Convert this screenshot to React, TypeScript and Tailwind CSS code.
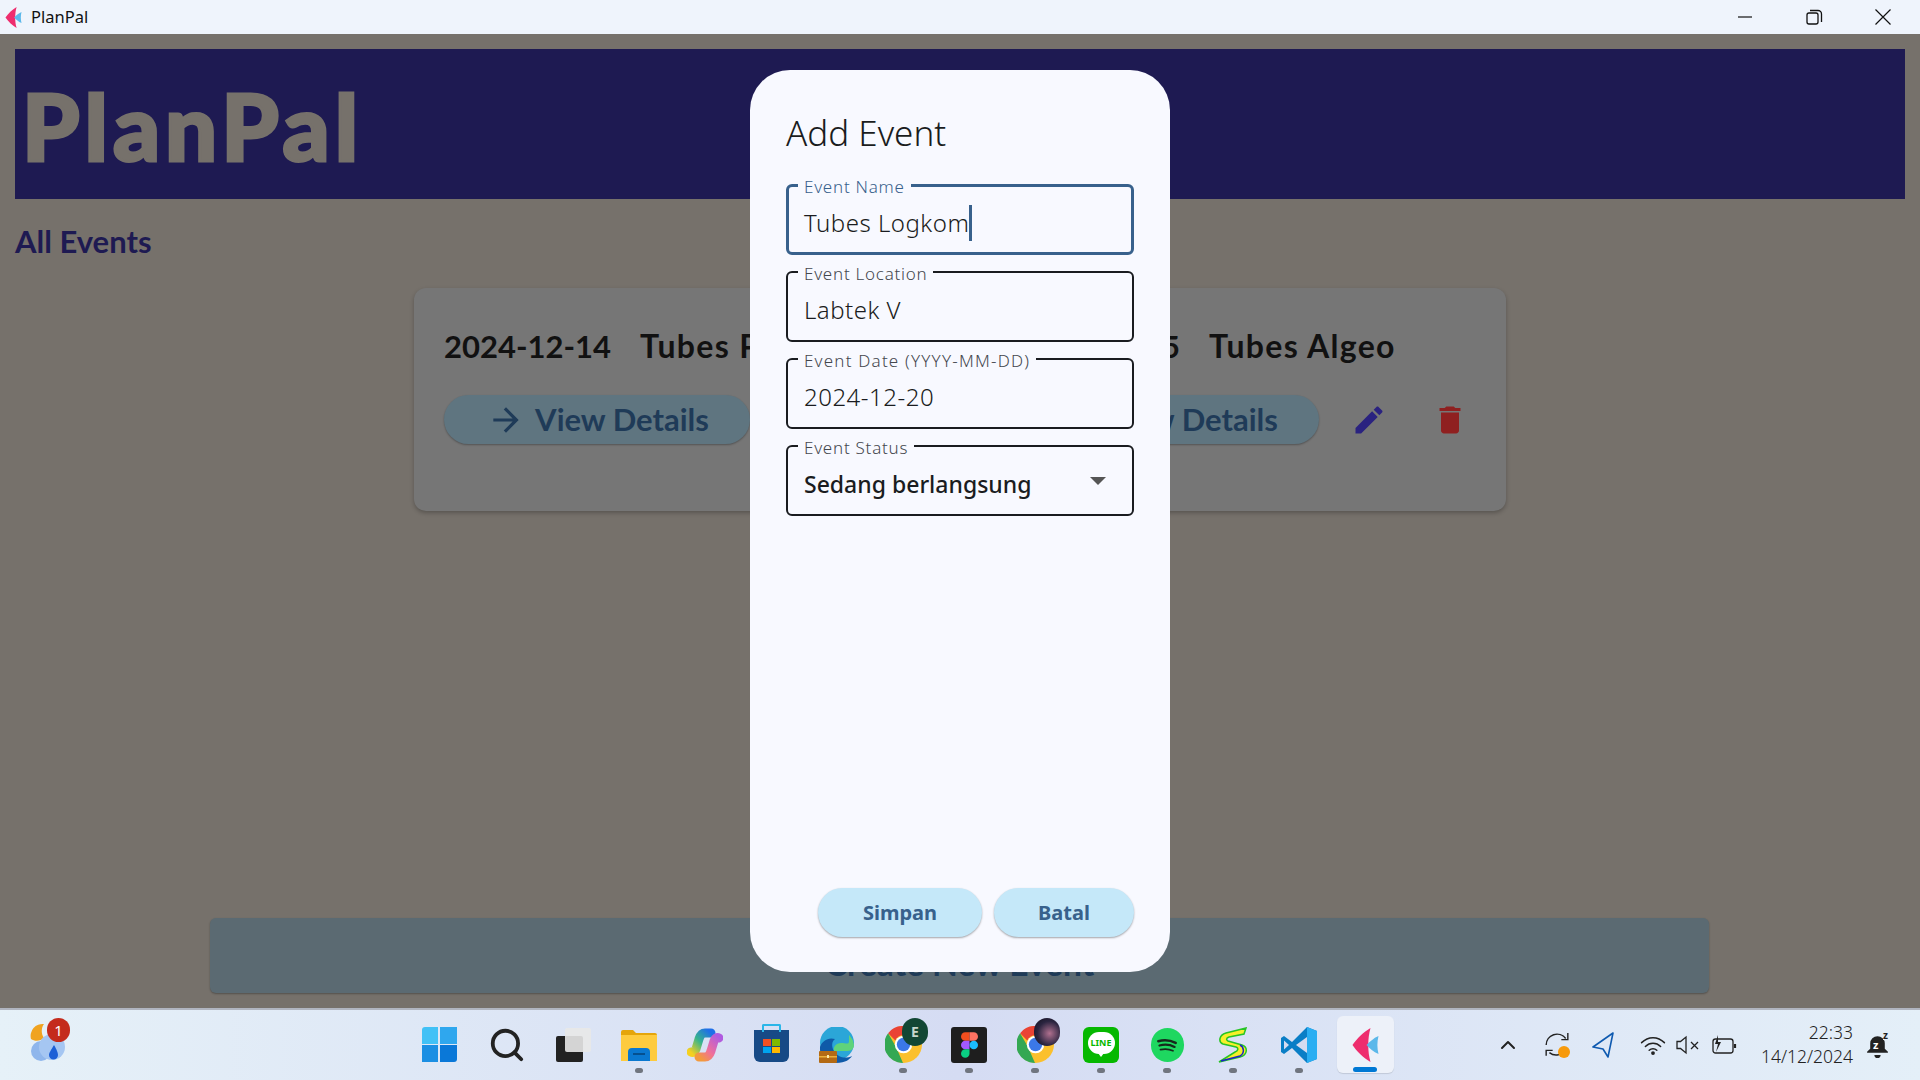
import { ChevronUp, Search } from "lucide-react";
import type { ReactNode } from "react";

const jost = "[font-family:Lato,sans-serif]";
const segoe = "[font-family:'Noto_Sans',sans-serif]";

function Field({ label, children, focused = false, wide = false }: { label: string; children: ReactNode; focused?: boolean; wide?: boolean }) {
  return (
    <div
      className={`relative h-[71px] rounded-[6px] flex items-center pt-[6px] pr-[26px] ${
        focused ? "border-[3px] border-[#38618c] pl-[15px]" : "border-2 border-[#1a1c20] pl-[16px]"
      }`}
    >
      <span
        className={`absolute ${focused ? "-top-[11px] left-[9px]" : "-top-[10px] left-[10px]"} bg-[#f8f9ff] px-[6px] text-[17px] font-light leading-[22px] ${
          wide ? "tracking-[1.2px]" : "tracking-[0.75px]"
        } ${focused ? "text-[#38618c]" : "text-[#44474e]"}`}
      >
        {label}
      </span>
      {children}
    </div>
  );
}

function Bubble({ children }: { children: ReactNode }) {
  return (
    <div className={`w-[306px] h-[49px] pl-[2px] rounded-full bg-[#5f7580] shadow-[0_1px_2px_rgba(0,0,0,0.3)] flex items-center justify-center gap-[10px] text-[31px] font-bold text-[#1f3b58] ${jost}`}>
      <svg viewBox="0 0 24 24" className="w-[38px] h-[38px] fill-[#1f3b58] shrink-0">
        <path d="M12 4l-1.41 1.41L16.17 11H4v2h12.17l-5.58 5.59L12 20l8-8z" />
      </svg>
      {children}
    </div>
  );
}

function TaskIcon({ children, dot = false, active = false }: { children: ReactNode; dot?: boolean; active?: boolean }) {
  return (
    <div className="relative w-[66px] h-full flex items-center justify-center">
      {active && <div className="absolute left-[5px] top-[6px] w-[57px] h-[57px] rounded-[6px] bg-[#edf1f9] shadow-[0_1px_1px_rgba(0,0,0,0.12)]" />}
      <div className="relative w-[38px] h-[38px] -mt-[1px] flex items-center justify-center">{children}</div>
      {dot && <div className="absolute bottom-[7px] left-1/2 -translate-x-1/2 w-[8px] h-[5px] rounded-full bg-[#70757f]" />}
      {active && <div className="absolute bottom-[8px] left-1/2 -translate-x-1/2 w-[24px] h-[5px] rounded-full bg-[#0078d4]" />}
    </div>
  );
}

function PlanPalLogo({ className }: { className: string }) {
  return (
    <svg viewBox="0 0 26 34" className={className}>
      <path d="M18 0 C11 4 4 11 0 17 C4 23 11 30 18 34 C15 24 15 10 18 0Z" fill="#ee2d6e" />
      <path d="M26 8 C21 10 17 14 14 17 C17 20 21 24 26 26 C24.500 20 24.500 14 26 8Z" fill="#5bb8ea" />
    </svg>
  );
}

function Chrome({ badge }: { badge: ReactNode }) {
  return (
    <>
      <svg viewBox="0 0 36 36" className="w-[37px] h-[37px]">
        <circle cx="18" cy="18" r="18" fill="#fbc02d" />
        <path d="M18 0A18 18 0 0 1 33.600 9H18a9 9 0 0 0-8 5L3 7A18 18 0 0 1 18 0Z" fill="#ea4335" />
        <path d="M3 7l7.500 13 7 16A18 18 0 0 1 3 7Z" fill="#34a853" />
        <circle cx="18" cy="18" r="8.500" fill="#fff" />
        <circle cx="18" cy="18" r="6.500" fill="#3b78e7" />
      </svg>
      {badge}
    </>
  );
}

export default function App() {
  return (
    <div className={`w-[1920px] h-[1080px] flex flex-col overflow-hidden ${segoe}`}>
      {/* title bar */}
      <div className="h-[34px] shrink-0 bg-[#eff4fc] flex items-center text-[#111]">
        <PlanPalLogo className="ml-[5px] w-[17px] h-[21px]" />
        <span className="ml-[9px] mt-[1px] text-[16.500px] leading-none">PlanPal</span>
        <div className="ml-auto flex items-center mr-[27px] gap-[49px]">
          <svg viewBox="0 0 20 20" className="w-[20px] h-[20px] stroke-[#111]" strokeWidth="1.200">
            <path d="M3 10h14" />
          </svg>
          <svg viewBox="0 0 20 20" className="w-[20px] h-[20px] fill-none stroke-[#111]" strokeWidth="1.300">
            <rect x="3" y="6" width="11" height="11" rx="2" />
            <path d="M6 3.500h8a3.500 3.500 0 0 1 3.500 3.500v8" />
          </svg>
          <svg viewBox="0 0 20 20" className="w-[20px] h-[20px] fill-none stroke-[#111]" strokeWidth="1.200">
            <path d="M2.500 2.500l15 15M17.500 2.500l-15 15" />
          </svg>
        </div>
      </div>

      {/* app area, dimmed */}
      <div className="relative flex-1 bg-[#76716b] px-[15px] pt-[15px] flex flex-col">
        <div className="h-[150px] bg-[#1e1a52] flex items-center pl-[7px] shrink-0">
          <span className={`text-[#76716b] text-[92px] leading-none font-black mt-[4px] tracking-[5px] [-webkit-text-stroke:3px_#76716b] ${jost}`}>PlanPal</span>
        </div>
        <h2 className={`mt-[22px] text-[31px] leading-[40px] font-bold text-[#1e1a52] ${jost}`}>All Events</h2>

        <div className="mt-[27px] ml-[399px] w-[1092px] h-[223px] rounded-[12px] bg-[#767676] shadow-[0_2px_4px_rgba(0,0,0,0.25)] pl-[30px] pr-[38px] pt-[40px] flex justify-between">
          <div>
            <div className={`flex gap-[29px] text-[31px] leading-[36px] font-bold text-[#111] ${jost}`}>
              <span>2024-12-14</span>
              <span className="text-[32px] tracking-[1.300px]">Tubes P</span>
            </div>
            <div className="mt-[31px]">
              <Bubble>View Details</Bubble>
            </div>
          </div>
          <div>
            <div className={`flex gap-[29px] text-[31px] leading-[36px] font-bold text-[#111] ${jost}`}>
              <span>2024-12-15</span>
              <span className="text-[32px] tracking-[1.300px]">Tubes Algeo</span>
            </div>
            <div className="mt-[31px] flex items-center">
              <Bubble>View Details</Bubble>
              <svg viewBox="0 0 24 24" className="ml-[32px] w-[36px] h-[36px] fill-[#2a2280]">
                <path d="M3 17.250V21h3.750L17.810 9.940l-3.750-3.750L3 17.250zM20.710 7.040c.39-.39.39-1.020 0-1.410l-2.340-2.340c-.39-.39-1.020-.39-1.410 0l-1.830 1.830 3.750 3.750 1.830-1.830z" />
              </svg>
              <svg viewBox="0 0 24 24" className="ml-[45px] w-[36px] h-[36px] fill-[#8f2020]">
                <path d="M6 19c0 1.100.9 2 2 2h8c1.100 0 2-.9 2-2V7H6v12zM19 4h-3.500l-1-1h-5l-1 1H5v2h14V4z" />
              </svg>
            </div>
          </div>
        </div>

        <div className={`mt-auto mb-[15px] ml-[195px] w-[1499px] h-[75px] rounded-[6px] bg-[#5b6a72] shadow-[0_1px_2px_rgba(0,0,0,0.3)] flex justify-center pt-[24px] text-[33.500px] leading-[42px] font-bold text-[#1f3b58] ${jost}`}>
          Create New Event
        </div>

        {/* dialog */}
        <div className="absolute left-[750px] top-[36px] w-[420px] h-[902px] rounded-[40px] bg-[#f8f9ff] pl-[36px] pr-[36px] pb-[35px] pt-[40px] flex flex-col">
          <h1 className="text-[35px] leading-[46px] font-light text-[#1a1c20]">Add Event</h1>
          <div className="mt-[28px] flex flex-col gap-[16px]">
            <Field label="Event Name" focused>
              <span className="text-[24px] font-light leading-[32px] tracking-[0.5px] text-[#1a1c20]">Tubes Logkom</span>
              <span className="w-[3px] h-[36px] bg-[#38618c]" />
            </Field>
            <Field label="Event Location">
              <span className="text-[24px] font-light leading-[32px] tracking-[0.5px] text-[#1a1c20]">Labtek V</span>
            </Field>
            <Field label="Event Date (YYYY-MM-DD)" wide>
              <span className="text-[24px] font-light leading-[32px] tracking-[0.5px] text-[#1a1c20]">2024-12-20</span>
            </Field>
            <Field label="Event Status">
              <span className="text-[23px] leading-[32px] font-medium text-[#1a1c20]">Sedang berlangsung</span>
              <span className="ml-auto -mt-[6px] w-0 h-0 border-x-[8px] border-x-transparent border-t-[8px] border-t-[#555]" />
            </Field>
          </div>
          <div className="mt-auto flex justify-end gap-[12px]">
            <div className="w-[164px] h-[49px] rounded-full bg-[#c5e8f9] shadow-[0_1px_2px_rgba(0,0,0,0.35)] flex items-center justify-center text-[20px] font-bold text-[#38618c]">Simpan</div>
            <div className="w-[140px] h-[49px] rounded-full bg-[#c5e8f9] shadow-[0_1px_2px_rgba(0,0,0,0.35)] flex items-center justify-center text-[20px] font-bold text-[#38618c]">Batal</div>
          </div>
        </div>
      </div>

      {/* taskbar */}
      <div className="relative h-[72px] shrink-0 border-t-2 border-[#b0b5c0] bg-gradient-to-r from-[#e6f1f8] via-[#d5dcf3] to-[#e4eff8] flex items-center">
        <div className="absolute left-[30px] top-[8px] w-[42px] h-[46px]">
          <svg viewBox="0 0 36 44" className="w-[36px] h-[44px]">
            <path d="M14 6a12 12 0 0 0-13 15c4 3 10 2 13-1-3-4-3-10 0-14z" fill="#f0a320" />
            <circle cx="11" cy="33" r="10" fill="#8fb6ec" />
            <circle cx="22" cy="29" r="13" fill="#a5c6f2" />
            <path d="M24 27c3 5 4 8 4 10a4.500 4.500 0 0 1-9 0c0-2 2-5 5-10z" fill="#1c5fd6" />
          </svg>
          <div className="absolute left-[17px] top-0 w-[23px] h-[24px] rounded-full bg-[#c42b1c] flex items-center justify-center text-white text-[15px] leading-none">1</div>
        </div>

        <div className="ml-[408px] h-full flex">
          <TaskIcon>
            <div className="-ml-[4px] grid grid-cols-2 gap-[1.500px] w-[35px] h-[35px]">
              <div className="bg-[#41c1f6] rounded-tl-[3px]" />
              <div className="bg-[#2fa7ee]" />
              <div className="bg-[#1b8fe3]" />
              <div className="bg-[#0a78d8] rounded-br-[3px]" />
            </div>
          </TaskIcon>
          <TaskIcon>
            <Search size={38} strokeWidth={2.400} className="text-[#222]" />
          </TaskIcon>
          <TaskIcon>
            <div className="absolute left-[2px] top-[10px] w-[27px] h-[26px] rounded-[2px] bg-[#222]" />
            <div className="absolute left-[11px] top-[2px] w-[26px] h-[24px] rounded-[2px] bg-[#e8e8e8]/90" />
          </TaskIcon>
          <TaskIcon dot>
            <svg viewBox="0 0 36 32" className="w-[36px] h-[32px]">
              <path d="M0 3a2 2 0 0 1 2-2h10l3 3h19a2 2 0 0 1 2 2v26H0z" fill="#e5a50a" />
              <rect y="6" width="36" height="26" fill="#fecb3e" />
              <path d="M6 32v-9a4 4 0 0 1 4-4h14a4 4 0 0 1 4 4v9z" transform="translate(1 0)" fill="#0a78d0" />
              <rect x="12" y="24" width="12" height="2" fill="#05508f" />
            </svg>
          </TaskIcon>
          <TaskIcon>
            <svg viewBox="0 0 36 34" className="w-[36px] h-[34px] fill-none" strokeWidth="9" strokeLinecap="round">
              <defs>
                <linearGradient id="copa" x1="0" y1="1" x2="1" y2="0">
                  <stop offset="0" stopColor="#f5d020" />
                  <stop offset=".5" stopColor="#38b48b" />
                  <stop offset="1" stopColor="#1f6fe8" />
                </linearGradient>
                <linearGradient id="copb" x1="1" y1="0" x2="0" y2="1">
                  <stop offset="0" stopColor="#b05be0" />
                  <stop offset=".6" stopColor="#f0709a" />
                  <stop offset="1" stopColor="#f39a3c" />
                </linearGradient>
              </defs>
              <path d="M24 5h-6c-4 0-5 3-6 6L9 21c-1 3-3 4-5 3" stroke="url(#copa)" />
              <path d="M12 29h6c4 0 5-3 6-6l3-10c1-3 3-4 5-3" stroke="url(#copb)" />
            </svg>
          </TaskIcon>
          <TaskIcon>
            <div className="relative w-[35px] h-[32px] mt-[3px] rounded-b-[6px] bg-[#174a86] grid grid-cols-2 gap-[1px] p-[9px]">
              <div className="absolute left-[8px] -top-[6px] w-[19px] h-[8px] border-2 border-b-0 border-[#2bb6e8] rounded-t-[2px]" />
              <div className="bg-[#f25022]" />
              <div className="bg-[#7fba00]" />
              <div className="bg-[#00a4ef]" />
              <div className="bg-[#ffb900]" />
            </div>
          </TaskIcon>
          <TaskIcon>
            <svg viewBox="0 0 36 36" className="w-[36px] h-[36px]">
              <circle cx="18" cy="16" r="17" fill="#2ba6d8" />
              <path d="M30 8a17 17 0 0 1 5 10c0 5-4 6-8 6H15c-1-4 2-8 7-8 5 0 8 2 8-2z" fill="#5fd37a" />
              <path d="M1 20c-1 8 6 16 16 16s14-4 16-7c-6 3-14 2-18-5-3-5-2-10 1-12C9 10 3 14 1 20z" fill="#0f5aa8" />
              <rect x="0" y="24" width="18" height="12" rx="1" fill="#b36a14" />
              <rect x="0" y="29" width="18" height="1.500" fill="#ecb03a" />
              <rect x="8" y="28" width="2" height="3" fill="#fde9a8" />
            </svg>
          </TaskIcon>
          <TaskIcon dot>
            <Chrome
              badge={
                <div className="absolute left-[18px] -top-[8px] w-[26px] h-[28px] rounded-full bg-[#124734] flex items-center justify-center text-[#c6d6cc] text-[14px] font-bold">E</div>
              }
            />
          </TaskIcon>
          <TaskIcon dot>
            <div className="w-[36px] h-[36px] rounded-[3px] bg-[#1e1e1e] flex items-center justify-center">
              <svg viewBox="0 0 16 24" className="w-[17px] h-[26px]">
                <path d="M0 4a4 4 0 0 1 4-4h4v8H4a4 4 0 0 1-4-4z" fill="#f24e1e" />
                <path d="M8 0h4a4 4 0 0 1 0 8H8z" fill="#ff7262" />
                <path d="M0 12a4 4 0 0 1 4-4h4v8H4a4 4 0 0 1-4-4z" fill="#a259ff" />
                <circle cx="12" cy="12" r="4" fill="#1abcfe" />
                <path d="M0 20a4 4 0 0 1 4-4h4v4a4 4 0 0 1-8 0z" fill="#0acf83" />
              </svg>
            </div>
          </TaskIcon>
          <TaskIcon dot>
            <Chrome
              badge={
                <div className="absolute left-[18px] -top-[8px] w-[26px] h-[28px] rounded-full bg-[radial-gradient(circle_at_60%_55%,#b0708f,#2b2540_55%,#0e0c18)]" />
              }
            />
          </TaskIcon>
          <TaskIcon dot>
            <div className="relative w-[36px] h-[36px] rounded-[6px] bg-[#06b800] flex items-center justify-center">
              <div className="relative w-[27px] h-[22px] -mt-[4px] rounded-full bg-white flex items-center justify-center text-[#06b800] text-[9px] font-bold leading-none">LINE</div>
              <div className="absolute left-[15px] top-[26px] w-0 h-0 border-x-[3px] border-x-transparent border-t-[4px] border-t-white" />
            </div>
          </TaskIcon>
          <TaskIcon dot>
            <div className="w-[33px] h-[34px] rounded-full bg-[#1ed760] flex items-center justify-center">
              <svg viewBox="0 0 24 24" className="w-[26px] h-[26px] fill-none stroke-[#16291c]" strokeLinecap="round">
                <path d="M4 8.500c5-1.500 11-1 16 1.500" strokeWidth="2.400" />
                <path d="M5 12.500c4.500-1.200 10-.8 14 1.300" strokeWidth="2" />
                <path d="M6 16.300c4-.9 8-.6 11.500 1" strokeWidth="1.700" />
              </svg>
            </div>
          </TaskIcon>
          <TaskIcon dot>
            <svg viewBox="0 0 30 36" className="w-[30px] h-[36px]">
              <path d="M28 1L8 6C1 8 0 15 5 17l13 3c3 1 2 4-1 5L1 35l21-5c8-2 8-10 2-12L10 14c-2-1-2-3 1-4l15-3z" fill="#f6f02a" stroke="#27c424" strokeWidth="1.500" />
              <path d="M22 18c4 2 5 8 0 11L3 34" fill="none" stroke="#1c23c8" strokeWidth="1.500" />
            </svg>
          </TaskIcon>
          <TaskIcon dot>
            <svg viewBox="0 0 36 36" className="w-[36px] h-[36px]">
              <path d="M26 0L11 15 3 9 0 11v14l3 2 8-6 15 15 10-4V4z" fill="#0a7ec6" />
              <path d="M26 0l10 4v28l-10 4z" fill="#2aaef2" />
              <path d="M26 10L15 18l11 8z" fill="#d5dcf0" />
              <path d="M3 13.500L8 18l-5 4.500z" fill="#d5dcf0" />
            </svg>
          </TaskIcon>
          <TaskIcon active>
            <PlanPalLogo className="w-[27px] h-[34px]" />
          </TaskIcon>
        </div>

        {/* system tray */}
        <div className="ml-auto h-full flex items-center text-[#222]">
          <ChevronUp size={24} strokeWidth={2} />
          <div className="relative ml-[24px] w-[26px] h-[26px]">
            <svg viewBox="0 0 24 24" className="w-[26px] h-[26px] fill-none stroke-[#222]" strokeWidth="1.300">
              <path d="M2 12a10 10 0 0 1 18-6M22 1v6h-6M20 16a10 10 0 0 1-15 3M2 22v-5h6" />
            </svg>
            <div className="absolute right-0 bottom-0 w-[12px] h-[12px] rounded-full bg-[#f79a0c]" />
          </div>
          <svg viewBox="0 0 22 26" className="ml-[22px] w-[22px] h-[26px] fill-none stroke-[#0f5ab0]" strokeWidth="1.600" strokeLinejoin="round">
            <path d="M21 1L1 15l10 2 5 8z" />
          </svg>
          <svg viewBox="0 0 26 20" className="ml-[26px] w-[26px] h-[19px] fill-none stroke-[#222]" strokeWidth="1.600" strokeLinecap="round">
            <path d="M1 7c7-7 17-7 24 0M5 11c4.500-4.500 11.500-4.500 16 0M9 15c2.200-2 5.800-2 8 0" />
            <circle cx="13" cy="18" r="1.200" fill="#222" />
          </svg>
          <svg viewBox="0 0 24 20" className="ml-[10px] w-[24px] h-[20px] fill-none stroke-[#222]" strokeWidth="1.300">
            <path d="M1 6.500h3.500L10 2v16l-5.500-4.500H1z" />
            <path d="M15 7l7 7M22 7l-7 7" />
          </svg>
          <svg viewBox="0 0 25 20" className="ml-[12px] w-[25px] h-[20px] fill-none stroke-[#222]" strokeWidth="1.300">
            <rect x="1" y="4" width="20" height="14" rx="2.500" />
            <path d="M23 9v4" strokeWidth="2.200" />
            <path d="M6 0L3 9h3l-2 8 5-10H6z" fill="#222" stroke="none" />
          </svg>
          <div className="ml-[24px] -mt-[3px] text-right text-[17.500px] leading-[24px] font-light text-[#222]">
            <div>22:33</div>
            <div>14/12/2024</div>
          </div>
          <div className="relative ml-[14px] mr-[32px] w-[21px] h-[25px]">
            <svg viewBox="0 0 20 24" className="w-[21px] h-[25px] fill-[#222]">
              <path d="M10 3a7 7 0 0 1 7 7v5l3 3v1H0v-1l3-3v-5a7 7 0 0 1 7-7zM7 21h6a3 3 0 0 1-6 0z" />
            </svg>
            <span className="absolute left-[6px] top-[6px] text-white text-[11px] leading-none font-bold">z</span>
            <span className="absolute right-0 -top-[3px] text-[#222] text-[10px] leading-none font-bold bg-[#e4eff8]">z</span>
          </div>
        </div>
      </div>
    </div>
  );
}
